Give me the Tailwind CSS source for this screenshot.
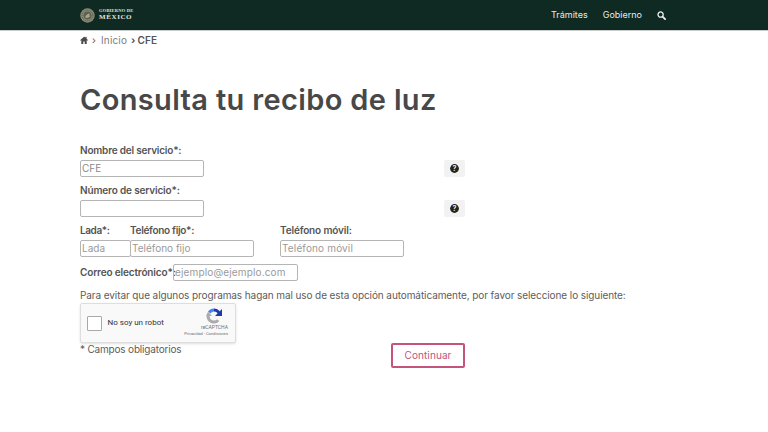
<!DOCTYPE html>
<html lang="es">
<head>
<meta charset="utf-8">
<script src="https://cdn.jsdelivr.net/npm/@tailwindcss/browser@4"></script>
<title>Consulta tu recibo de luz</title>
</head>
<body class="bg-white font-['Inter',sans-serif] text-[#545454] w-[768px] h-[432px] overflow-hidden">
<header class="h-[31px] bg-[#0f2a22] border-b border-[#c9cccb] flex items-center justify-between pl-[80px] pr-[102px]">
  <div class="flex items-center gap-[4px]">
    <svg width="15" height="15" viewBox="0 0 15 15"><circle cx="7.5" cy="7.5" r="7.2" fill="#8d8a74"/><circle cx="7.5" cy="7.5" r="5.4" fill="none" stroke="#4a5244" stroke-width="1" stroke-dasharray="1 1"/><circle cx="7.5" cy="7.5" r="4" fill="#5a6253"/><path d="M5 9.5c1-3 3-4 5-4-1 1-.5 2 0 3-1.500 1.500-3.500 1.500-5 1Z" fill="#a9a58e"/></svg>
    <div class="flex flex-col text-[#e4e4dc] font-['Liberation_Serif',serif] font-bold leading-none">
      <span class="text-[4.5px] tracking-[0.2px] mb-[1px]">GOBIERNO DE</span>
      <span class="text-[7px] tracking-[0.6px]">MÉXICO</span>
    </div>
  </div>
  <nav class="flex items-center gap-[15px] text-[9px] text-[#e6ebe9]">
    <span>Trámites</span>
    <span>Gobierno</span>
    <svg width="9" height="9" viewBox="0 0 10 10"><circle cx="4" cy="4" r="2.9" fill="none" stroke="#eef1f0" stroke-width="1.4"/><path d="M6.2 6.2 9 9" stroke="#eef1f0" stroke-width="2" stroke-linecap="round"/></svg>
  </nav>
</header>
<main class="px-[80px]">
  <div class="h-[18px] flex items-center text-[10px] tracking-[0.15px]">
    <svg width="8" height="8" viewBox="0 0 10 10"><path d="M5 .8 0 5.2l.6.7 1-.8V10h2.500V6.800h1.800V10h2.500V5.100l1 .8.6-.7L8.200 3V1H7v1L5 .8Z" fill="#4a4a4a"/></svg>
    <span class="ml-[4px] text-[#555]">›</span>
    <span class="ml-[5px] text-[#7d7d7d]">Inicio</span>
    <span class="ml-[4px] font-bold text-[#555]">›</span>
    <span class="ml-[2px] font-semibold text-[#555]">CFE</span>
  </div>
  <h1 class="mt-[31px] text-[29px] leading-[40px] font-semibold text-[#484848] tracking-[0.35px]">Consulta tu recibo de luz</h1>
  <form class="mt-[24px] w-[385px] text-[10px]">
    <div class="flex items-end justify-between">
      <div>
        <label class="block h-[16px] leading-[12px] font-semibold tracking-[-0.2px]">Nombre del servicio*:</label>
        <div class="w-[124px] h-[17px] border border-[#b5b5b5] rounded-[2px] px-[1px] leading-[14px] text-[#8a8a8a]">CFE</div>
      </div>
      <button type="button" class="w-[21px] h-[17px] bg-[#f2f2f2] rounded-[2px] flex items-center justify-center">
        <svg width="9" height="9" viewBox="0 0 9 9"><circle cx="4.500" cy="4.500" r="4.400" fill="#222"/><text x="4.500" y="7" text-anchor="middle" font-size="7" font-weight="700" fill="#f2f2f2">?</text></svg>
      </button>
    </div>
    <div class="flex items-end justify-between mt-[7px]">
      <div>
        <label class="block h-[16px] leading-[12px] font-semibold tracking-[-0.15px]">Número de servicio*:</label>
        <div class="w-[124px] h-[17px] border border-[#b5b5b5] rounded-[2px]"></div>
      </div>
      <button type="button" class="w-[21px] h-[17px] bg-[#f2f2f2] rounded-[2px] flex items-center justify-center">
        <svg width="9" height="9" viewBox="0 0 9 9"><circle cx="4.500" cy="4.500" r="4.400" fill="#222"/><text x="4.500" y="7" text-anchor="middle" font-size="7" font-weight="700" fill="#f2f2f2">?</text></svg>
      </button>
    </div>
    <div class="flex items-end mt-[7px] whitespace-nowrap">
      <div class="w-[50px]">
        <label class="block h-[16px] leading-[12px] font-semibold tracking-[-0.4px]">Lada*:</label>
        <div class="w-[51px] h-[17px] border border-[#b5b5b5] rounded-[2px] px-[1px] leading-[14px] text-[#9a9a9a]">Lada</div>
      </div>
      <div class="w-[150px]">
        <label class="block h-[16px] leading-[12px] font-semibold tracking-[-0.3px]">Teléfono fijo*:</label>
        <div class="w-[124px] h-[17px] border border-[#b5b5b5] rounded-[2px] px-[1px] leading-[14px] text-[#9a9a9a]">Teléfono fijo</div>
      </div>
      <div>
        <label class="block h-[16px] leading-[12px] font-semibold tracking-[-0.15px]">Teléfono móvil:</label>
        <div class="w-[124px] h-[17px] border border-[#b5b5b5] rounded-[2px] px-[1px] leading-[14px] text-[#9a9a9a] tracking-[0.15px]">Teléfono móvil</div>
      </div>
    </div>
    <div class="flex items-center mt-[7px] whitespace-nowrap">
      <label class="w-[93px] font-semibold tracking-[-0.15px]">Correo electrónico*:</label>
      <div class="w-[125px] h-[17px] border border-[#b5b5b5] rounded-[2px] px-[1px] leading-[14px] text-[#9a9a9a] tracking-[0.15px]">ejemplo@ejemplo.com</div>
    </div>
  </form>
  <p class="mt-[7px] text-[10px] leading-[14px] tracking-[-0.09px] whitespace-nowrap text-[#5c5c5c]">Para evitar que algunos programas hagan mal uso de esta opción automáticamente, por favor seleccione lo siguiente:</p>
  <div class="w-[385px] flex justify-between mt-[1px]">
    <div>
      <div class="w-[156px] h-[40px] bg-[#f9f9f9] border border-[#dedede] rounded-[2px] shadow-sm flex items-center relative font-['Roboto',sans-serif]">
        <div class="ml-[6px] w-[15px] h-[15px] bg-white border border-[#a8a8a8] rounded-[1px]"></div>
        <span class="ml-[5.5px] text-[8px] text-[#333]">No soy un robot</span>
        <div class="absolute right-[7px] top-[4px] flex flex-col items-end text-[#6f6f6f]">
          <svg class="mr-[6px]" width="16" height="16" viewBox="0 0 16 16"><path d="M8 3.500V.5A7.500 7.500 0 0 1 15.500 8H12.500A4.500 4.500 0 0 0 8 3.500Z" fill="#1c3aa9"/><path d="M16 1v7H9Z" fill="#1c3aa9"/><path d="M8 .5A7.500 7.500 0 0 0 2 3.500L4.500 5.500A4.500 4.500 0 0 1 8 3.500Z" fill="#4285f4"/><path d="M.5 8a7.500 7.500 0 0 0 12.800 5.300L11.200 11.200A4.500 4.500 0 0 1 3.500 8H6L2 3.800 0 8Z" fill="#ababab"/></svg>
          <span class="text-[5px] leading-[7px]">reCAPTCHA</span>
          <span class="text-[4px] leading-[5px]">Privacidad - Condiciones</span>
        </div>
      </div>
      <p class="text-[10px] leading-[12px] tracking-[-0.18px] text-[#5c5c5c]">* Campos obligatorios</p>
    </div>
    <button type="button" class="w-[74px] h-[25px] mt-[40px] border-2 border-[#c4547c] rounded-[2px] text-[10px] tracking-[0.1px] text-[#c2537a]">Continuar</button>
  </div>
</main>
</body>
</html>
